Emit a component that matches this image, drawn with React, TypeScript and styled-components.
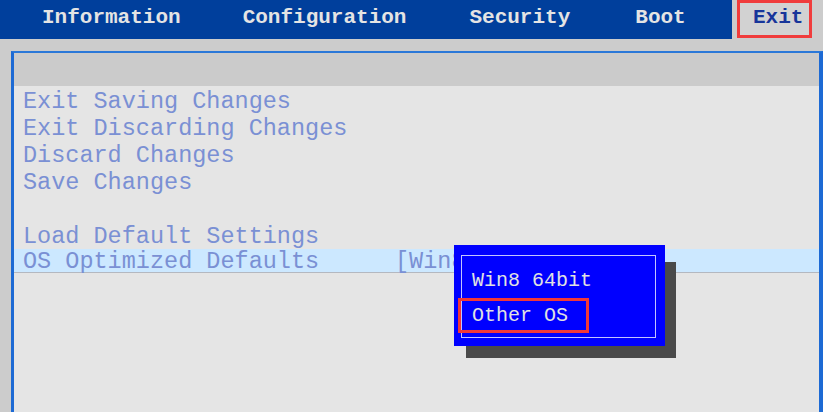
import React from "react";
import styled, { createGlobalStyle } from "styled-components";

const Global = createGlobalStyle`
  html, body { margin: 0; padding: 0; background: #cccccc; }
  #root { width: 823px; height: 412px; }
`;

const Screen = styled.div`
  width: 823px;
  height: 412px;
  overflow: hidden;
  background: #cccccc;
  display: flex;
  flex-direction: column;
  font-family: "Liberation Mono", "DejaVu Sans Mono", monospace;
`;

const TopBar = styled.div`
  display: flex;
  height: 39px;
  flex: none;
`;

const TabStrip = styled.div`
  display: flex;
  align-items: flex-start;
  width: 732px;
  height: 39px;
  padding-left: 11px;
  box-sizing: border-box;
  background: #003f9c;
`;

const Tab = styled.div<{ $pad: number }>`
  padding: 0 ${(p) => p.$pad}px;
  color: #e4e4e4;
  font-weight: bold;
  font-size: 21px;
  line-height: 36px;
  height: 39px;
  white-space: nowrap;
`;

const ActiveTab = styled.div`
  margin-left: 5px;
  width: 75px;
  height: 38px;
  box-sizing: border-box;
  border: 3px solid #f03c3c;
  background: #d2d2d2;
  color: #17359a;
  font-weight: bold;
  font-size: 21px;
  line-height: 30px;
  padding-left: 13px;
`;

const Panel = styled.div`
  margin: 12px 0 0 11px;
  flex: 1;
  display: flex;
  flex-direction: column;
  border-top: 2px solid #2b78d8;
  border-left: 3px solid #1d6ad4;
  border-right: 4px solid #1d6ad4;
  background: #e5e5e5;
`;

const PanelHeader = styled.div`
  height: 33px;
  background: #cbcbcb;
  flex: none;
`;

const Content = styled.div`
  position: relative;
  flex: 1;
  display: flex;
  flex-direction: column;
`;

const Row = styled.div<{ $selected?: boolean }>`
  display: flex;
  height: ${(p) => (p.$selected ? 24 : 27)}px;
  box-sizing: border-box;
  padding-top: ${(p) => (p.$selected ? 2 : 3)}px;
  margin-top: ${(p) => (p.$selected ? 0.5 : 0)}px;
  margin-bottom: ${(p) => (p.$selected ? 2 : 0)}px;
  align-items: center;
  padding-left: 9px;
  font-size: 23.5px;
  color: #7a90d4;
  white-space: nowrap;
  background: ${(p) => (p.$selected ? "#cce8ff" : "transparent")};
  border-bottom: ${(p) => (p.$selected ? "1px solid #b4b8c0" : "none")};
`;

const Label = styled.span`
  width: 372px;
  flex: none;
`;

const Popup = styled.div`
  position: absolute;
  left: 440px;
  top: 159px;
  width: 211px;
  height: 101px;
  box-sizing: border-box;
  padding: 10px 9px 8px 7px;
  z-index: 2;
  &::before {
    content: "";
    position: absolute;
    left: 12px;
    top: 17px;
    width: 210px;
    height: 96px;
    background: #4a4a4a;
    z-index: -2;
  }
`;

const PopupFace = styled.div`
  position: absolute;
  inset: 0;
  background: #0000ff;
  z-index: -1;
`;

const Frame = styled.div`
  height: 83px;
  box-sizing: border-box;
  border: 1px solid #c4c4ff;
  padding-top: 7px;
`;

const Option = styled.div<{ $focused?: boolean }>`
  margin-left: -4px;
  width: 131px;
  height: 35px;
  box-sizing: border-box;
  border: 3px solid ${(p) => (p.$focused ? "#f23838" : "transparent")};
  padding-left: 11px;
  font-size: 20px;
  line-height: 29px;
  color: #e2e2e2;
  white-space: nowrap;
`;

export default function App() {
  return (
    <Screen>
      <Global />
      <TopBar>
        <TabStrip>
          <Tab $pad={31}>Information</Tab>
          <Tab $pad={31}>Configuration</Tab>
          <Tab $pad={32}>Security</Tab>
          <Tab $pad={33}>Boot</Tab>
        </TabStrip>
        <ActiveTab>Exit</ActiveTab>
      </TopBar>
      <Panel>
        <PanelHeader />
        <Content>
          <Row>Exit Saving Changes</Row>
          <Row>Exit Discarding Changes</Row>
          <Row>Discard Changes</Row>
          <Row>Save Changes</Row>
          <Row />
          <Row>Load Default Settings</Row>
          <Row $selected>
            <Label>OS Optimized Defaults</Label>
            <span>[Win8 64bit]</span>
          </Row>
          <Popup>
            <PopupFace />
            <Frame>
              <Option>Win8 64bit</Option>
              <Option $focused>Other OS</Option>
            </Frame>
          </Popup>
        </Content>
      </Panel>
    </Screen>
  );
}
